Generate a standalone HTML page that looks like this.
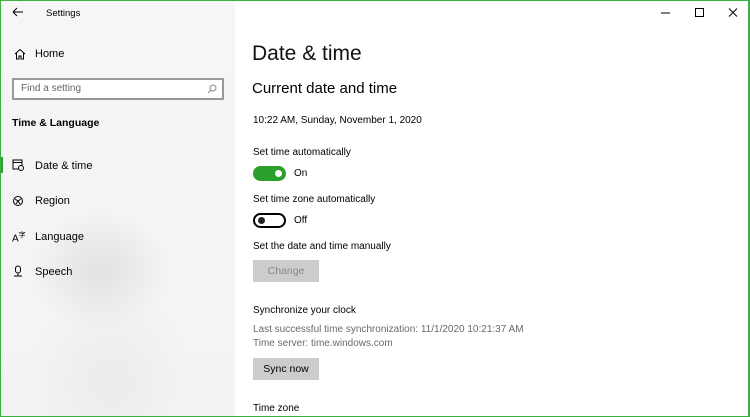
<!DOCTYPE html>
<html><head><style>
*{margin:0;padding:0;box-sizing:border-box}
body{width:750px;height:417px;overflow:hidden;font-family:"Liberation Sans",sans-serif;color:#000;position:relative;background:#fff}
.frame{position:absolute;inset:0;border:1px solid #3cb043;border-right-width:2px;z-index:10;pointer-events:none}
.side{position:absolute;left:0;top:0;width:235px;height:417px;background:radial-gradient(ellipse 70px 60px at 100px 270px,#e2e2e2,rgba(244,244,244,0)),radial-gradient(ellipse 80px 90px at 110px 380px,#ebebeb,rgba(244,244,244,0)),linear-gradient(#f6f6f7,#f3f3f3)}
.t{position:absolute;white-space:nowrap}
.nav{font-size:11px;left:35px}
.ic{position:absolute;left:12px}
.h1{font-size:21px;left:252px;top:42px;color:#111}
.h2{font-size:15px;left:252px;top:80px}
.s{font-size:10px;left:253px}
.g{color:#6a6a6a}
.btn{position:absolute;left:253px;width:66px;height:22px;background:#ccc;font-size:10.5px;text-align:center;line-height:22px}
</style></head><body>
<div class="side"></div>
<div class="frame"></div>
<svg class="t" style="left:12px;top:7px" width="12" height="10"><path d="M1 5H11M1 5L5 1M1 5L5 9" stroke="#000" stroke-width="1" fill="none"/></svg>
<div class="t" style="left:46px;top:8px;font-size:9.5px">Settings</div>
<svg class="t" style="left:14px;top:48px" width="12" height="12"><path d="M1 6L6 1.5L11 6M2.5 5V11H5V8H7V11H9.5V5" stroke="#000" fill="none"/></svg>
<div class="t nav" style="top:48px">Home</div>
<div class="t" style="left:12px;top:78px;width:212px;height:22px;border:2px solid #999;background:#fff"></div>
<div class="t" style="left:21px;top:83px;font-size:10px;color:#666">Find a setting</div>
<svg class="t" style="left:207px;top:84px" width="10" height="10"><circle cx="6" cy="4" r="3" stroke="#888" fill="none"/><path d="M4 6L1 9" stroke="#888"/></svg>
<div class="t" style="left:12px;top:117px;font-size:10.5px;font-weight:bold">Time &amp; Language</div>
<div class="t" style="left:0;top:157px;width:3px;height:16px;background:#2ca02c"></div>
<svg class="ic" style="top:159px" width="12" height="12"><rect x="1" y="1" width="9" height="9" stroke="#000" fill="none"/><path d="M1 3.5H10" stroke="#000"/><circle cx="9" cy="9" r="2.5" fill="#f2f2f2" stroke="#000"/></svg>
<div class="t nav" style="top:160px">Date &amp; time</div>
<svg class="ic" style="top:195px" width="12" height="12"><circle cx="6" cy="6" r="4.5" stroke="#000" fill="none"/><path d="M3 4L6 6L9 4M4 9L6 6L8 9" stroke="#000" fill="none"/></svg>
<div class="t nav" style="top:195px">Region</div>
<div class="t" style="left:12px;top:230px;font-size:10px">A<sup style="font-size:7px">字</sup></div>
<div class="t nav" style="top:231px">Language</div>
<svg class="ic" style="top:265px" width="12" height="12"><rect x="3.5" y="1" width="5" height="7" rx="2.5" stroke="#000" fill="none"/><path d="M2 11H10M6 8V11" stroke="#000"/></svg>
<div class="t nav" style="top:266px">Speech</div>
<svg class="t" style="left:660px;top:8px" width="80" height="10"><path d="M1 5H10" stroke="#000"/><rect x="35.5" y="0.5" width="8" height="8" stroke="#000" fill="none"/><path d="M69 0.5L77 8.5M77 0.5L69 8.5" stroke="#000"/></svg>
<div class="t h1">Date &amp; time</div>
<div class="t h2">Current date and time</div>
<div class="t s" style="top:115px">10:22 AM, Sunday, November 1, 2020</div>
<div class="t s" style="top:147px">Set time automatically</div>
<div class="t" style="left:253px;top:166px;width:33px;height:15px;border-radius:8px;background:#2ca02c"></div>
<div class="t" style="left:275px;top:170px;width:7px;height:7px;border-radius:50%;background:#fff"></div>
<div class="t s" style="left:294px;top:168px">On</div>
<div class="t s" style="top:194px">Set time zone automatically</div>
<div class="t" style="left:253px;top:213px;width:33px;height:15px;border-radius:8px;border:2px solid #000"></div>
<div class="t" style="left:258px;top:217px;width:7px;height:7px;border-radius:50%;background:#222"></div>
<div class="t s" style="left:294px;top:215px">Off</div>
<div class="t s" style="top:241px">Set the date and time manually</div>
<div class="btn" style="top:260px;color:#888">Change</div>
<div class="t s" style="top:305px">Synchronize your clock</div>
<div class="t s g" style="top:324px">Last successful time synchronization: 11/1/2020 10:21:37 AM</div>
<div class="t s g" style="top:338px">Time server: time.windows.com</div>
<div class="btn" style="top:358px">Sync now</div>
<div class="t s" style="top:403px">Time zone</div>
</body></html>
